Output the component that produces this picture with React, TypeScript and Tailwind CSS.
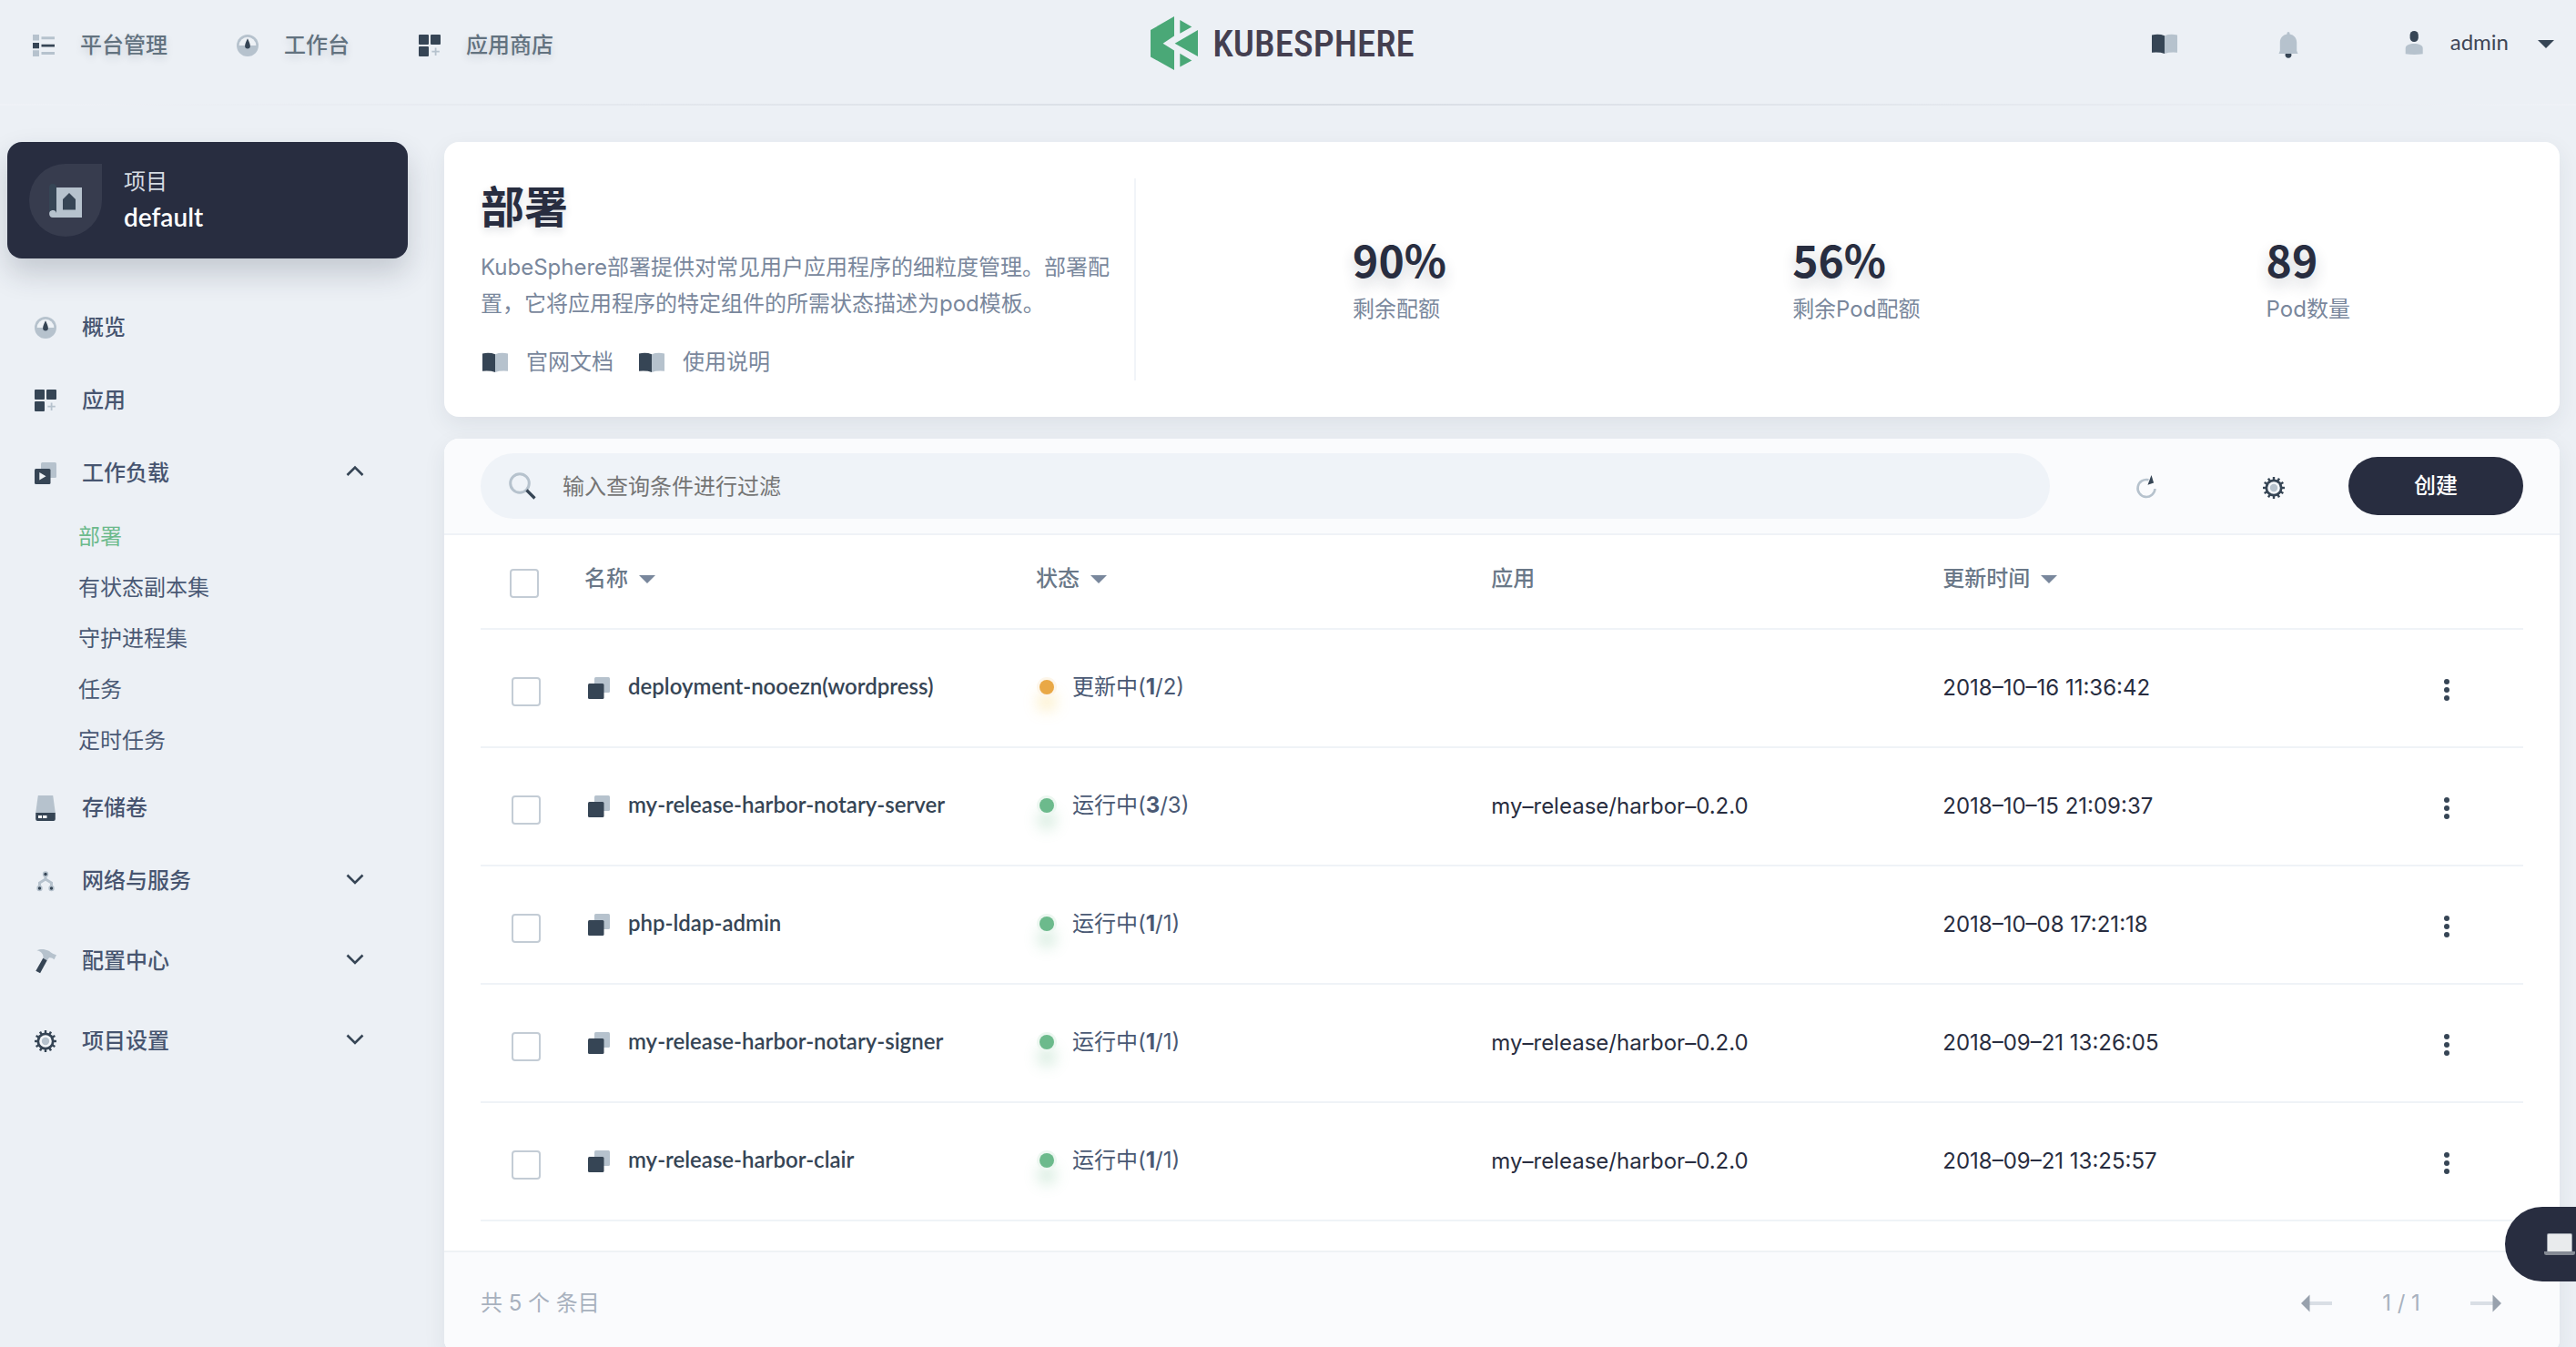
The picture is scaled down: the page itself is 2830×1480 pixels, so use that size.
import React, { useState } from 'react';

const DARK = '#364555';
const LIGHT = '#b6c2cd';

type IconProps = { className?: string };

function ListIcon({ className = 'size-6' }: IconProps) {
  return (
    <svg viewBox="0 0 24 24" className={className} aria-hidden="true">
      <path fill={LIGHT} d="M0 0h7v6.5H0zM9.500 2.200h14.500v3H9.500zM0 17.300h7V24H0zM9.500 19h14.500v3H9.500z" />
      <path fill={DARK} d="M0 9h7v6.200H0zM9.500 10.800h14.500v2.600H9.500z" />
    </svg>
  );
}

function GaugeIcon({ className = 'size-6' }: IconProps) {
  return (
    <svg viewBox="0 0 24 24" className={className} aria-hidden="true">
      <circle cx="12" cy="12" r="12" fill={LIGHT} />
      <path fill="#eef2f6" d="M2.700 12a9.300 9.300 0 0 1 18.600 0z" />
      <path fill={DARK} d="M12 4.300c.9 2.200 2.900 5.600 2.900 8.200a2.900 2.900 0 0 1-5.800 0c0-2.600 2-6 2.900-8.200z" />
    </svg>
  );
}

function AppsIcon({ className = 'size-6' }: IconProps) {
  return (
    <svg viewBox="0 0 24 24" className={className} aria-hidden="true">
      <g fill={DARK}>
        <rect width="11" height="11" rx="1" />
        <rect x="13" width="11" height="11" rx="1" />
        <rect y="13" width="11" height="11" rx="1" />
      </g>
      <path fill={LIGHT} d="M17.700 14.500h1.800v3.300h3.300v1.800h-3.300v3.300h-1.800v-3.300h-3.300v-1.800h3.300z" />
    </svg>
  );
}

function StackIcon({ className = 'size-6', play = false }: IconProps & { play?: boolean }) {
  return (
    <svg viewBox="0 0 24 24" className={className} aria-hidden="true">
      <rect x="7" width="17" height="17" rx="1.500" fill={LIGHT} />
      <rect y="7" width="17.500" height="17" rx="1.500" fill={DARK} />
      {play && <path fill="#eef2f6" d="M5.300 11v8.600l7.200-4.300z" />}
    </svg>
  );
}

function VolumeIcon({ className = 'size-7' }: IconProps) {
  return (
    <svg viewBox="0 0 28 28" className={className} aria-hidden="true">
      <path fill={LIGHT} d="M5.800 0h16.400l2.600 19H3.200z" />
      <path fill={DARK} d="M3.200 19h21.600v7a2 2 0 0 1-2 2H5.200a2 2 0 0 1-2-2z" />
      <path fill="#fff" d="M6 22h4v3H6zM11 22h4.500v3H11z" />
    </svg>
  );
}

function NetworkIcon({ className = 'size-6' }: IconProps) {
  return (
    <svg viewBox="0 0 24 24" className={className} aria-hidden="true">
      <path d="M12 5v5M5.500 20v-6l6.500-4 6.500 4v6" fill="none" stroke={LIGHT} strokeWidth="3" />
      <g fill={LIGHT}>
        <circle cx="12" cy="4.500" r="3.200" />
        <circle cx="5.500" cy="20" r="3.200" />
        <circle cx="18.500" cy="20" r="3.200" />
      </g>
      <g fill={DARK}>
        <circle cx="12" cy="4.500" r="1.700" />
        <circle cx="5.500" cy="20" r="1.700" />
        <circle cx="18.500" cy="20" r="1.700" />
      </g>
    </svg>
  );
}

function HammerIcon({ className = 'size-7' }: IconProps) {
  return (
    <svg viewBox="0 0 28 28" className={className} aria-hidden="true">
      <path fill={LIGHT} d="M4.500 2.300C8 .4 13 .5 17 2.500c3 1.600 4.500 3.600 9 4.700l-2.500 5c-1.700-1.600-3.300-2.400-5.500-1.900l-2.300 3-4.200-2.300c.6-3.800-1.500-7.500-7-8.700z" />
      <path fill={DARK} d="M11.300 10.800l4.400 2.500-7.600 14-4.800-2.500z" />
    </svg>
  );
}

function GearIcon({ className = 'size-6' }: IconProps) {
  return (
    <svg viewBox="0 0 24 24" className={className} aria-hidden="true">
      <g fill={DARK}>
        {[0, 30, 60, 90, 120, 150].map((deg) => (
          <rect key={deg} x="10.800" y="0" width="2.400" height="24" transform={`rotate(${deg} 12 12)`} />
        ))}
        <circle cx="12" cy="12" r="9.600" />
      </g>
      <circle cx="12" cy="12" r="6.800" fill="#f4f7fa" />
      <circle cx="12" cy="12" r="4.200" fill={LIGHT} />
    </svg>
  );
}

function BookIcon({ className = 'h-6 w-7' }: IconProps) {
  return (
    <svg viewBox="0 0 28 24" className={className} aria-hidden="true">
      <path fill={DARK} d="M0 2.500q8-1.600 14 .8V23q-5.500-2-14-1.200z" />
      <path fill={LIGHT} d="M28 2.500q-8-1.600-14 .8V23q5.500-2 14-1.200z" />
    </svg>
  );
}

function BellIcon() {
  return (
    <svg viewBox="0 0 32 32" className="size-8" aria-hidden="true">
      <circle cx="16" cy="28.300" r="3.400" fill={DARK} />
      <path fill={LIGHT} d="M14.500 4.500a1.500 1.500 0 0 1 3 0v1c4.500.8 7.700 4.300 7.700 9v9.300l1.300 3.200h-21l1.300-3.200v-9.300c0-4.700 3.200-8.200 7.700-9z" />
    </svg>
  );
}

function UserIcon() {
  return (
    <svg viewBox="0 0 32 32" className="size-8" aria-hidden="true">
      <rect x="11.600" y="2" width="9.200" height="12" rx="4.500" fill={DARK} />
      <path fill={LIGHT} d="M6.700 21c0-3.300 4.300-5 9.500-5s9.500 1.700 9.500 5v6.200q-9.500 1.600-19 0z" />
    </svg>
  );
}

function ProjectIcon() {
  return (
    <svg viewBox="0 0 36 38" className="h-[38px] w-9" aria-hidden="true">
      <path fill={DARK} d="M0 5a4 4 0 0 1 8 0v27H0z" />
      <path fill={LIGHT} d="M8 5h28v33H4a4 4 0 1 1 4-5z" />
      <path fill={DARK} d="M15 18l7-7 7 7v11.500H15z" />
    </svg>
  );
}

function SearchIcon() {
  return (
    <svg viewBox="0 0 32 32" className="size-8" aria-hidden="true">
      <circle cx="13" cy="13" r="10.300" fill="none" stroke={LIGHT} strokeWidth="3" />
      <path d="M20.500 20.500l9 9" stroke={DARK} strokeWidth="3.200" />
    </svg>
  );
}

function RefreshIcon() {
  return (
    <svg viewBox="0 0 32 32" className="size-8" aria-hidden="true">
      <path d="M18.500 8.300A9.500 9.500 0 1 0 25.500 18" fill="none" stroke={LIGHT} strokeWidth="2.600" />
      <path fill={DARK} d="M21.500 3l2.600 8.500-6.600 2.300z" />
    </svg>
  );
}

function Chevron({ up = false }: { up?: boolean }) {
  return (
    <svg viewBox="0 0 24 24" className="size-6" aria-hidden="true">
      <path d={up ? 'M3.500 14L12 5.500l8.500 8.500' : 'M3.500 5.500L12 14l8.500-8.500'} fill="none" stroke={DARK} strokeWidth="2.600" />
    </svg>
  );
}

function Caret({ className }: IconProps) {
  return (
    <svg viewBox="0 0 18 9" className={className} aria-hidden="true">
      <path fill="currentColor" d="M0 0h18L9 9z" />
    </svg>
  );
}

function ArrowIcon({ flip = false }: { flip?: boolean }) {
  return (
    <svg viewBox="0 0 34 20" className="h-5 w-[34px]" aria-hidden="true">
      <g transform={flip ? 'rotate(180 17 10)' : undefined}>
        <path fill="#d9dee5" d="M9 8h25v4H9z" />
        <path fill="#98a1ad" d="M0 10l9.500-9.500v19z" />
      </g>
    </svg>
  );
}

function LaptopIcon() {
  return (
    <svg viewBox="0 0 34 24" className="h-6 w-[34px] shrink-0" aria-hidden="true">
      <rect x="3" width="28" height="22" rx="2" fill="#9aa0aa" />
      <rect x="4" y="1" width="26" height="19" rx="1" fill="#e9ebed" />
      <path fill="#868b95" d="M0 20h34v1.500a2.500 2.500 0 0 1-2.500 2.500h-29A2.500 2.500 0 0 1 0 21.500z" />
    </svg>
  );
}

function Logo() {
  return (
    <a href="#home" aria-label="KubeSphere" className="flex items-center gap-4">
      <svg viewBox="0 0 52 60" className="h-[60px] w-[52px]" aria-hidden="true">
        <g fill="#4aa877">
          <path d="M26 0v21.500L13.600 29.800 26 37.500V59L0 44.500V15z" />
          <path d="M32.300 4l13 7.600-13 7.200zM32.300 55.500V40.800l13 7.600z" />
          <path d="M52 15v29L26.600 29.700z" />
        </g>
      </svg>
      <span className="font-['Roboto_Condensed','Roboto',sans-serif] text-[41px] leading-[60px] font-medium text-[#443f50]">KUBESPHERE</span>
    </a>
  );
}

const topLinks = [
  { label: '平台管理', icon: <ListIcon /> },
  { label: '工作台', icon: <GaugeIcon /> },
  { label: '应用商店', icon: <AppsIcon /> },
];

function Header() {
  return (
    <header>
      <div className="grid h-[114px] grid-cols-[1fr_auto_1fr] items-start pr-6 pl-3">
        <nav className="flex items-center gap-[76px] pt-8 pl-6">
          {topLinks.map((l) => (
            <a key={l.label} href="#nav" className="flex items-center gap-7 leading-9 font-medium text-[#62727f] [text-shadow:0_4px_8px_rgba(36,46,66,0.15)]">
              {l.icon}
              {l.label}
            </a>
          ))}
        </nav>
        <div className="pt-[18px]">
          <Logo />
        </div>
        <div className="flex items-center justify-end pt-8">
          <button type="button" aria-label="文档" className="mr-[104px] flex size-8 items-center justify-center">
            <BookIcon />
          </button>
          <button type="button" aria-label="通知" className="mr-[106px]">
            <BellIcon />
          </button>
          <button type="button" className="flex items-center gap-6 text-[#3f4757]">
            <UserIcon />
            <span className="pb-1 font-['Lato',sans-serif] leading-7">admin</span>
            <Caret className="ml-2 h-[9px] w-[18px] text-[#364555]" />
          </button>
        </div>
      </div>
      <div className="h-0.5 bg-linear-to-r from-[#eff2f7] via-[#d8dde4] to-[#eff2f7]" />
    </header>
  );
}

const workloads = ['部署', '有状态副本集', '守护进程集', '任务', '定时任务'];

function MenuItem({ icon, label, arrow, up }: { icon: React.ReactNode; label: string; arrow?: boolean; up?: boolean }) {
  return (
    <a href="#menu" className="flex h-20 items-center pr-[46px] pl-[30px] font-medium text-[#475570]">
      <span className="flex w-6 items-center justify-center">{icon}</span>
      <span className="ml-7 flex-1">{label}</span>
      {arrow && <Chevron up={up} />}
    </a>
  );
}

function Sidebar() {
  return (
    <aside className="w-[440px] shrink-0">
      <div className="flex h-32 items-center rounded-2xl bg-[#282d40] pl-6 shadow-[0_16px_32px_rgba(36,46,66,0.2)]">
        <div className="flex size-20 items-center justify-center rounded-full rounded-tr-none bg-[#373c4e]">
          <ProjectIcon />
        </div>
        <div className="ml-6 pb-1">
          <p className="leading-10 text-[#d5dbe2]">项目</p>
          <p className="font-['Lato',sans-serif] text-[28px] leading-9 font-semibold text-white">default</p>
        </div>
      </div>
      <nav className="mt-9 leading-9">
        <MenuItem icon={<GaugeIcon />} label="概览" />
        <MenuItem icon={<AppsIcon />} label="应用" />
        <MenuItem icon={<StackIcon play />} label="工作负载" arrow up />
        <ul className="pt-0.5 pb-1.5 pl-[78px]">
          {workloads.map((w, i) => (
            <li key={w}>
              <a href="#workload" className={i === 0 ? 'block leading-[56px] text-[#6cba8c]' : 'block leading-[56px] text-[#4a5974]'}>
                {w}
              </a>
            </li>
          ))}
        </ul>
        <MenuItem icon={<VolumeIcon className="size-7 shrink-0" />} label="存储卷" />
        <MenuItem icon={<NetworkIcon />} label="网络与服务" arrow />
        <div className="mt-2">
          <MenuItem icon={<HammerIcon className="size-7 shrink-0" />} label="配置中心" arrow />
        </div>
        <div className="mt-2">
          <MenuItem icon={<GearIcon />} label="项目设置" arrow />
        </div>
      </nav>
    </aside>
  );
}

const stats = [
  { value: '90%', label: '剩余配额' },
  { value: '56%', label: '剩余Pod配额' },
  { value: '89', label: 'Pod数量' },
];

function Banner() {
  return (
    <section className="flex rounded-2xl bg-white p-10 shadow-[0_8px_24px_rgba(36,46,66,0.08)]">
      <div className="w-[720px] shrink-0 border-r-2 border-[#f1f4f8] pr-6">
        <h1 className="text-5xl leading-[64px] font-bold text-[#282d40] [text-shadow:0_4px_8px_rgba(36,46,66,0.15)]">部署</h1>
        <p className="mt-3.5 leading-10 text-[#79879c]">
          KubeSphere部署提供对常见用户应用程序的细粒度管理。部署配置，它将应用程序的特定组件的所需状态描述为pod模板。
        </p>
        <div className="mt-[26px] flex gap-7 pb-0.5 pl-0.5 leading-9 text-[#79879c]">
          {['官网文档', '使用说明'].map((t) => (
            <a key={t} href="#docs" className="flex items-center gap-5">
              <BookIcon />
              {t}
            </a>
          ))}
        </div>
      </div>
      <div className="ml-12 flex flex-1 items-center justify-around">
        {stats.map((s) => (
          <div key={s.label}>
            <p className="mb-1.5 font-['Noto_Sans_CJK_SC',sans-serif] text-5xl leading-[60px] font-semibold text-[#282d40] [text-shadow:0_8px_16px_rgba(36,46,66,0.2)]">{s.value}</p>
            <p className="leading-10 text-[#79879c]">{s.label}</p>
          </div>
        ))}
      </div>
    </section>
  );
}

type Row = { name: string; status: string; ready: number; total: number; app: string; time: string };

const rows: Row[] = [
  { name: 'deployment-nooezn(wordpress)', status: '更新中', ready: 1, total: 2, app: '', time: '2018–10–16 11:36:42' },
  { name: 'my-release-harbor-notary-server', status: '运行中', ready: 3, total: 3, app: 'my–release/harbor–0.2.0', time: '2018–10–15 21:09:37' },
  { name: 'php-ldap-admin', status: '运行中', ready: 1, total: 1, app: '', time: '2018–10–08 17:21:18' },
  { name: 'my-release-harbor-notary-signer', status: '运行中', ready: 1, total: 1, app: 'my–release/harbor–0.2.0', time: '2018–09–21 13:26:05' },
  { name: 'my-release-harbor-clair', status: '运行中', ready: 1, total: 1, app: 'my–release/harbor–0.2.0', time: '2018–09–21 13:25:57' },
];

function Checkbox({ label, className }: { label: string; className: string }) {
  return (
    <input
      type="checkbox"
      aria-label={label}
      className={`block size-8 appearance-none rounded-sm border-2 border-[#c3ccd5] bg-white checked:bg-[#c3ccd5] ${className}`}
    />
  );
}

function SortHeader({ children }: { children: string }) {
  return (
    <button type="button" className="flex items-center gap-3 font-medium">
      {children}
      <Caret className="h-[9px] w-[18px] text-[#79879c]" />
    </button>
  );
}

function Workloads() {
  const [query, setQuery] = useState('');
  return (
    <section className="mt-6 rounded-2xl bg-white shadow-[0_8px_24px_rgba(36,46,66,0.08)]">
      <div className="flex items-center rounded-t-2xl border-b-2 border-[#eff2f7] bg-[#fafbfd] px-10 py-4">
        <label className="flex h-[72px] flex-1 items-center gap-7 rounded-full bg-[#eff3f8] px-[30px]">
          <SearchIcon />
          <input
            type="text"
            aria-label="过滤"
            value={query}
            onChange={(e) => setQuery(e.target.value)}
            placeholder="输入查询条件进行过滤"
            className="flex-1 bg-transparent pt-0.5 leading-9 outline-none placeholder:text-[#757575]"
          />
        </label>
        <button type="button" aria-label="刷新" className="ml-[90px] pt-0.5">
          <RefreshIcon />
        </button>
        <button type="button" aria-label="设置" className="ml-28 mr-[70px] pt-1">
          <GearIcon />
        </button>
        <button type="button" className="h-16 w-48 rounded-full bg-[#282d40] font-medium text-white">
          创建
        </button>
      </div>
      <div className="px-10 pb-8">
        <table className="w-full table-fixed border-collapse text-left">
          <colgroup>
            <col className="w-[114px]" />
            <col className="w-[22.100%]" />
            <col className="w-[22.300%]" />
            <col className="w-[22.100%]" />
            <col />
            <col className="w-[94px]" />
          </colgroup>
          <thead>
            <tr className="h-[103px] border-b-2 border-[#eff3f7] leading-9 text-[#6a7888]">
              <th scope="col">
                <Checkbox label="全选" className="mt-1 ml-8" />
              </th>
              <th scope="col" className="pb-1.5">
                <SortHeader>名称</SortHeader>
              </th>
              <th scope="col" className="pb-1.5">
                <SortHeader>状态</SortHeader>
              </th>
              <th scope="col" className="pb-1.5 font-medium">应用</th>
              <th scope="col" className="pb-1.5">
                <SortHeader>更新时间</SortHeader>
              </th>
              <th scope="col" aria-label="操作" />
            </tr>
          </thead>
          <tbody>
            {rows.map((r) => (
              <tr key={r.name} className="h-[130px] border-b-2 border-[#eff3f7] leading-9 text-[#282d40]">
                <td>
                  <Checkbox label={r.name} className="mt-2 ml-[34px]" />
                </td>
                <td>
                  <a href="#detail" className="flex items-center gap-5 pb-1 pl-1">
                    <StackIcon className="mt-1 size-6 shrink-0" />
                    <span className="font-['Lato',sans-serif] font-semibold text-[#364555]">{r.name}</span>
                  </a>
                </td>
                <td>
                  <div className="flex items-center gap-5 pb-0.5 pl-1 text-[#4a5974]">
                    <span
                      className={
                        r.status === '更新中'
                          ? 'size-4 rounded-full bg-[#e9a846] shadow-[0_0_0_3px_#fdf6ea,0_16px_16px_2px_rgba(245,205,90,0.35)]'
                          : 'size-4 rounded-full bg-[#6cba8c] shadow-[0_0_0_3px_#edf7f1,0_16px_16px_2px_rgba(108,186,140,0.3)]'
                      }
                    />
                    <span>
                      {r.status}(<b>{r.ready}</b>/{r.total})
                    </span>
                  </div>
                </td>
                <td>{r.app}</td>
                <td>{r.time}</td>
                <td>
                  <button type="button" aria-label="更多操作" className="block pt-1 pl-1">
                    <svg viewBox="0 0 12 24" className="h-6 w-3" aria-hidden="true">
                      <g fill={DARK}>
                        <circle cx="6" cy="3" r="3" />
                        <circle cx="6" cy="12" r="3" />
                        <circle cx="6" cy="21" r="3" />
                      </g>
                    </svg>
                  </button>
                </td>
              </tr>
            ))}
          </tbody>
        </table>
      </div>
      <footer className="flex h-[114px] items-center justify-between rounded-b-2xl border-t-2 border-[#eff2f5] bg-[#fafbfd] pr-16 pl-10 leading-9 text-[#a8b1be]">
        <span>共 5 个 条目</span>
        <div className="flex items-center gap-[52px]">
          <button type="button" aria-label="上一页">
            <ArrowIcon />
          </button>
          <span className="w-12 text-center">1 / 1</span>
          <button type="button" aria-label="下一页">
            <ArrowIcon flip />
          </button>
        </div>
      </footer>
    </section>
  );
}

export default function App() {
  return (
    <div className="relative h-screen overflow-hidden bg-[#ecf0f5] font-['Inter','Noto_Sans_CJK_SC',sans-serif] text-2xl">
      <Header />
      <div className="flex gap-10 pt-10 pr-[18px] pl-2">
        <Sidebar />
        <main className="min-w-0 flex-1">
          <Banner />
          <Workloads />
        </main>
      </div>
      <button
        type="button"
        aria-label="终端"
        className="absolute right-0 bottom-[72px] flex h-[82px] w-[78px] items-center justify-end rounded-l-full bg-[#282d40] pr-px"
      >
        <LaptopIcon />
      </button>
    </div>
  );
}
